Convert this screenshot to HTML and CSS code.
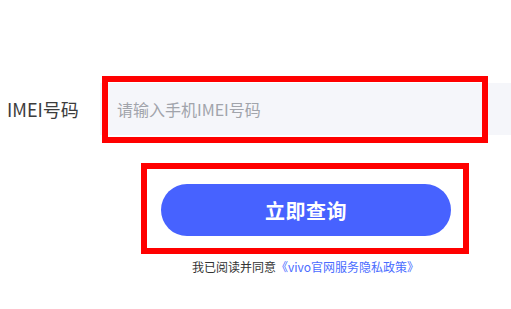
FILE: index.html
```html
<!DOCTYPE html>
<html lang="zh-CN">
<head>
<meta charset="utf-8">
<title>IMEI查询</title>
<link rel="stylesheet" href="styles.css">
</head>
<body>
<main class="page">
  <div class="form-row">
    <label class="label" for="imei">IMEI号码</label>
    <input class="input" id="imei" type="text" placeholder="请输入手机IMEI号码">
  </div>
  <div class="actions">
    <button class="submit" type="button">立即查询</button>
    <p class="agree">我已阅读并同意<a class="policy" href="#">《vivo官网服务隐私政策》</a></p>
  </div>
  <div class="mark mark-input"></div>
  <div class="mark mark-button"></div>
</main>
</body>
</html>
```

FILE: styles.css
```css
html, body {
  margin: 0;
  padding: 0;
  background: #ffffff;
  overflow: hidden;
}

.page {
  position: relative;
  width: 511px;
  height: 309px;
  font-family: "Noto Sans CJK SC", "Noto Sans", sans-serif;
  overflow: hidden;
}

.form-row {
  display: flex;
  align-items: center;
  padding-top: 83px;
  padding-left: 7px;
}

.label {
  flex: none;
  width: 93px;
  white-space: nowrap;
  font-size: 18px;
  line-height: 24px;
  color: #3c3c3c;
}

.input {
  flex: none;
  width: 440px;
  height: 52px;
  box-sizing: border-box;
  border: none;
  outline: none;
  margin: 0;
  padding: 0 0 0 17px;
  background: #f5f6fa;
  font-family: inherit;
  font-size: 16px;
  color: #333;
}

.input::placeholder {
  color: #a1a4ab;
}

.actions {
  padding-top: 49px;
  padding-left: 161px;
}

.submit {
  display: block;
  width: 290px;
  height: 52px;
  margin: 0;
  padding: 0;
  border: none;
  border-radius: 26px;
  background: #4762ff;
  color: #ffffff;
  font-family: inherit;
  font-size: 20px;
  font-weight: 700;
  letter-spacing: 0.5px;
}

.agree {
  margin: 22px 0 0 31px;
  font-size: 12px;
  line-height: 17px;
  color: #333333;
}

.policy {
  color: #4a6cff;
  text-decoration: none;
}

.mark {
  position: absolute;
  box-sizing: border-box;
  border: 6px solid #ff0000;
}

.mark-input {
  left: 102px;
  top: 76px;
  width: 386px;
  height: 67px;
}

.mark-button {
  left: 141px;
  top: 163px;
  width: 328px;
  height: 91px;
}
```
